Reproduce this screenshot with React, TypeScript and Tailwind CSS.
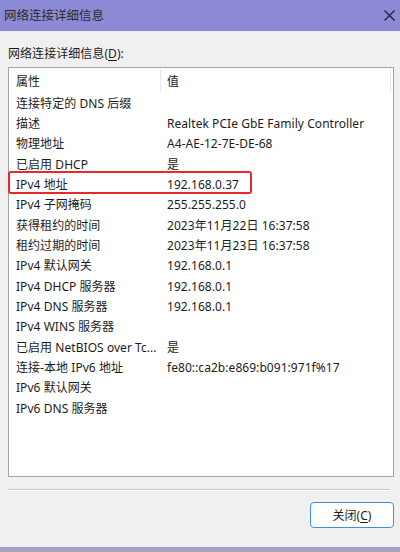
import React from "react";

const rows: [string, string][] = [
  ["连接特定的 DNS 后缀", ""],
  ["描述", "Realtek PCIe GbE Family Controller"],
  ["物理地址", "A4-AE-12-7E-DE-68"],
  ["已启用 DHCP", "是"],
  ["IPv4 地址", "192.168.0.37"],
  ["IPv4 子网掩码", "255.255.255.0"],
  ["获得租约的时间", "2023年11月22日 16:37:58"],
  ["租约过期的时间", "2023年11月23日 16:37:58"],
  ["IPv4 默认网关", "192.168.0.1"],
  ["IPv4 DHCP 服务器", "192.168.0.1"],
  ["IPv4 DNS 服务器", "192.168.0.1"],
  ["IPv4 WINS 服务器", ""],
  ["已启用 NetBIOS over Tc...", "是"],
  ["连接-本地 IPv6 地址", "fe80::ca2b:e869:b091:971f%17"],
  ["IPv6 默认网关", ""],
  ["IPv6 DNS 服务器", ""],
];

export default function App() {
  return (
    <div
      className="w-[400px] h-[552px] flex flex-col overflow-hidden text-[#1c1c1c]"
      style={{ fontFamily: '"Noto Sans", "Noto Sans CJK SC", sans-serif' }}
    >
      <div className="h-[31px] bg-[#8c8ad7] flex items-center justify-between pl-[4px] pr-[5px] pt-[2px] shrink-0">
        <span className="text-[12.5px] text-[#2a2a2a]">网络连接详细信息</span>
        <svg width="11" height="11" viewBox="0 0 11 11" className="-mt-[2px]">
          <path d="M0.5 0.5 L10.5 10.5 M10.5 0.5 L0.5 10.5" stroke="#1e1e2a" strokeWidth="1.2" />
        </svg>
      </div>
      <div className="h-[516px] bg-[#f0f0f0] flex flex-col pl-[8px] pt-[13px] shrink-0">
        <div className="h-[16px] leading-[16px] text-[12px] pt-[2px] tracking-[0.05px]">
          网络连接详细信息(<span className="underline underline-offset-2">D</span>):
        </div>
        <div className="mt-[7px] w-[386px] h-[410px] border border-[#a0a3a8] bg-white relative text-[12px] tracking-[0.05px]">
          <div className="h-[24px] flex items-center relative pt-[3px]">
            <div className="w-[152px] pl-[7px] h-full flex items-center border-r border-[#e5e5e5] -mt-[3px] pt-[3px]">属性</div>
            <div className="pl-[6px]">值</div>
            <div className="absolute right-[2px] top-0 h-full border-r border-[#e5e5e5]" />
          </div>
          {rows.map(([k, v], i) => (
            <div key={i} className="h-[20.35px] flex items-center whitespace-nowrap pt-[3px]">
              <div className="w-[152px] pl-[7px]">{k}</div>
              <div className="pl-[6px]">{v}</div>
            </div>
          ))}
          <div className="absolute left-[-1px] top-[103px] w-[244px] h-[23px] border-2 border-[#e8292c] rounded-[3px]" />
        </div>
        <div className="mt-[12px] w-[382px] h-[2px] border-t border-[#c9c9c9] border-b border-b-white" />
        <div className="mt-[11px] flex justify-end pr-[6px]">
          <button className="w-[84px] h-[26px] bg-white border border-[#3d8ee0] rounded-[4px] text-[12px] flex items-center justify-center pt-[2px]">
            关闭(<span className="underline underline-offset-2">C</span>)
          </button>
        </div>
      </div>
      <div className="h-[2px] bg-[#9a98e0] shrink-0" />
      <div className="h-[3px] bg-[#a7a7a7] shrink-0" />
    </div>
  );
}
